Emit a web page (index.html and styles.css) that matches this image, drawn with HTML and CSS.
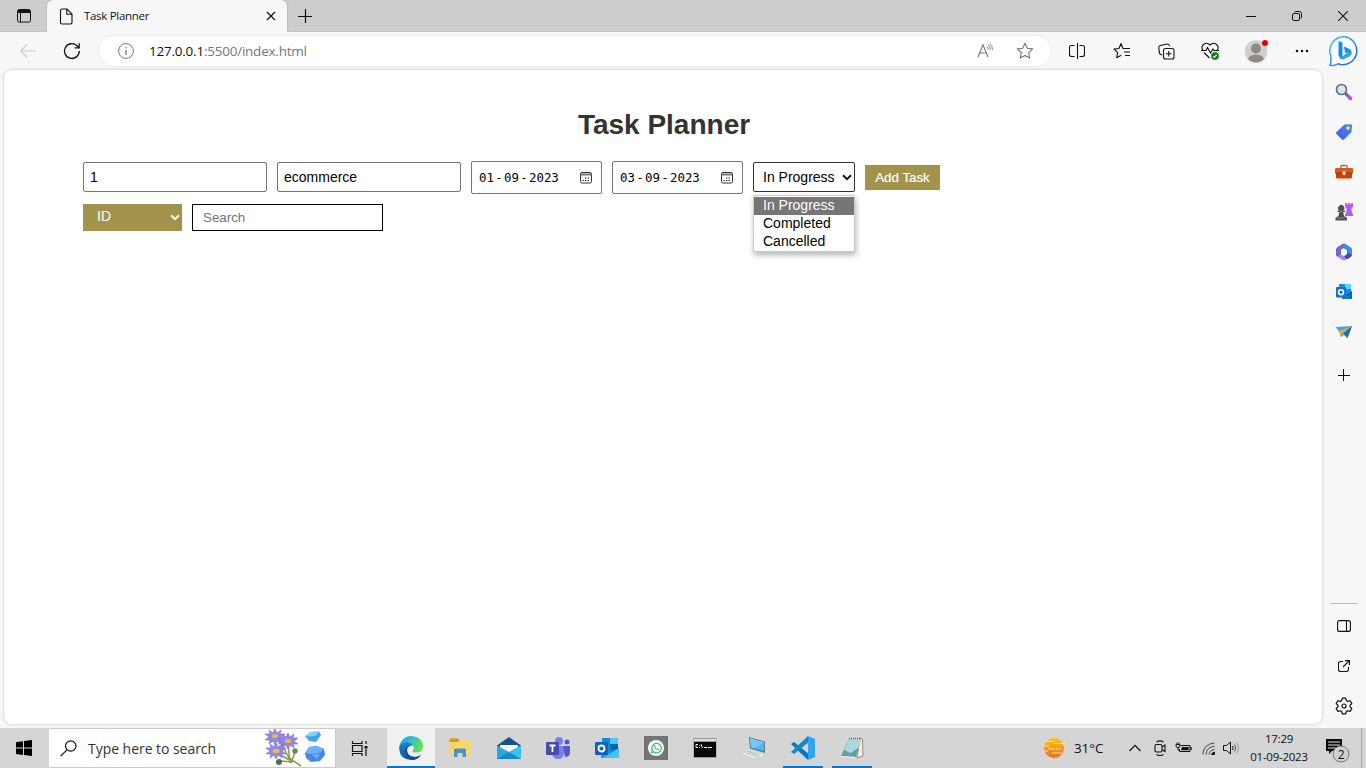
FILE: index.html
```html
<!DOCTYPE html>
<html lang="en">
<head>
<meta charset="utf-8">
<title>Task Planner</title>
<link rel="stylesheet" href="styles.css">
</head>
<body>
<div class="screen">
  <header class="titlebar">
    <div class="tab-actions">
      <svg width="16" height="16" viewBox="0 0 16 16"><rect x="1.500" y="1.500" width="13" height="12.600" rx="2" fill="none" stroke="#111"/><path d="M1.500 5V3.500a2 2 0 0 1 2-2h9a2 2 0 0 1 2 2V5z" fill="#111"/><path d="M4.500 5v9" stroke="#111"/></svg>
    </div>
    <div class="tab">
      <svg class="tab-icon" width="14" height="17" viewBox="0 0 14 17" fill="none" stroke="#111" stroke-width="1.100"><path d="M3 1h5l5 5v8.500q0 1.500-1.500 1.500H3q-1.500 0-1.500-1.500V2.500Q1.500 1 3 1z"/><path d="M7.800 1v5.200H13"/></svg>
      <span class="tab-title">Task Planner</span>
      <svg width="10" height="10" viewBox="0 0 10 10" stroke="#111" stroke-width="1.200"><path d="M1 1l8 8M9 1l-8 8"/></svg>
    </div>
    <div class="new-tab"><svg width="14" height="14" viewBox="0 0 14 14" stroke="#111" stroke-width="1.200"><path d="M7.500 0v14M0 7.500h14"/></svg></div>
    <div class="window-controls">
      <span><svg width="10" height="10" viewBox="0 0 10 10" stroke="#111"><path d="M0 5.500h10"/></svg></span>
      <span><svg width="10" height="10" viewBox="0 0 10 10" fill="none" stroke="#111"><rect x=".5" y="2.500" width="7" height="7" rx="1.500"/><path d="M2.500 1.200Q3 .5 4 .5h3.500q2 0 2 2V6q0 1-.8 1.500"/></svg></span>
      <span><svg width="10" height="10" viewBox="0 0 10 10" stroke="#111" stroke-width="1.100"><path d="M0 0l10 10M10 0L0 10"/></svg></span>
    </div>
  </header>

  <div class="toolbar">
    <span class="tool back"><svg width="16" height="14" viewBox="0 0 16 14" fill="none" stroke="#c9c9c9" stroke-width="1.100"><path d="M7 .5L.7 7 7 13.500M.7 7H16"/></svg></span>
    <span class="tool"><svg width="18" height="18" viewBox="0 0 18 18" fill="none" stroke="#111" stroke-width="1.300"><path d="M16.300 9A7.400 7.400 0 1 1 14 3.700l2 2"/><path d="M16.200 1.300v4.600h-4.600"/></svg></span>
    <div class="address">
      <svg class="info" width="16" height="16" viewBox="0 0 16 16" fill="none" stroke="#777"><circle cx="8" cy="8" r="7.400"/><path d="M8 7v5M8 4v1.400" stroke-width="1.300"/></svg>
      <span class="url"><b>127.0.0.1</b>:5500/index.html</span>
      <svg class="read" width="17" height="16" viewBox="0 0 17 16" fill="none" stroke="#777" stroke-width="1.100"><path d="M1 14L6 1.800 11 14M2.800 10h6.400"/><path d="M9.800 3.600q1.500 1 1.300 3M11 1.800q2.600 1.600 2.300 5M12.500.6q3.400 2.200 3 6.500" stroke-width=".9"/></svg>
      <svg class="star" width="18" height="18" viewBox="0 0 18 18" fill="none" stroke="#777" stroke-width="1.100" stroke-linejoin="round"><path d="M9 1.300l2.300 4.900 5.300.7-3.900 3.700 1 5.400L9 13.400 4.300 16l1-5.400L1.400 6.900l5.300-.7z"/></svg>
    </div>
    <span class="tool"><svg width="16" height="16" viewBox="0 0 16 16" fill="none" stroke="#111" stroke-width="1.100"><path d="M5.500 2.500h-3q-2 0-2 2v7q0 2 2 2h3M10.500 2.500h3q2 0 2 2v7q0 2-2 2h-3"/><path d="M8.500 0v16"/></svg></span>
    <span class="tool favorites"><svg width="18" height="18" viewBox="0 0 18 18" fill="none" stroke="#111" stroke-width="1.100" stroke-linejoin="round"><path d="M11.500 6.500H10L8 1.500 6 6.500l-5 .6 3.700 3.600-1 5 4.500-2.500M8 1.500l2 5h7M11 10h6M12 13.500h5"/></svg></span>
    <span class="tool"><svg width="17" height="17" viewBox="0 0 17 17" fill="none" stroke="#111" stroke-width="1.100"><rect x="5.500" y="5.500" width="10.500" height="10.500" rx="2"/><path d="M10.750 8v5.500M8 10.750h5.500M4 12L2.500 11.200Q1.700 10.800 1.400 10L.8 4.700Q.7 3 2.300 2.500L9 1q1.800-.2 2.300 1.300l.3.900"/></svg></span>
    <span class="tool"><svg width="18" height="18" viewBox="0 0 18 18" fill="none" stroke="#111" stroke-width="1.100"><path d="M2 8.500Q-.5 5 2.500 2.500 6-.2 9 3q3-3.200 6.500-.5Q18.500 5 16 8.500M3 10.500l5.500 5.500M0 8.500h5l1.500-2.800L9.500 11l2.500-4 1 1.500h5"/><circle cx="14" cy="14" r="3.700" fill="#187c22" stroke="#187c22" stroke-width=".5"/><path d="M12.200 14.300l1.200 1 2.200-2.500" stroke="#fff"/></svg></span>
    <span class="tool profile"><svg width="26" height="26" viewBox="0 0 26 26"><defs><clipPath id="av"><circle cx="12" cy="13.500" r="11"/></clipPath></defs><circle cx="12" cy="13.500" r="11.200" fill="#d0cecc"/><circle cx="12" cy="10.500" r="5" fill="#8d8986"/><ellipse cx="12" cy="22" rx="8" ry="5.500" fill="#8d8986" clip-path="url(#av)"/><circle cx="21" cy="5" r="3" fill="#e80000"/></svg></span>
    <span class="tool"><svg width="14" height="4" viewBox="0 0 14 4" fill="#111"><circle cx="2" cy="2" r="1.250"/><circle cx="7" cy="2" r="1.250"/><circle cx="12" cy="2" r="1.250"/></svg></span>
    <span class="tool bing"><svg width="32" height="32" viewBox="0 0 32 32"><defs><linearGradient id="bg1" x1="0" y1="0" x2="1" y2="1"><stop stop-color="#36c5f2"/><stop offset="1" stop-color="#2455d6"/></linearGradient><linearGradient id="bg2" x1="0" y1="0" x2=".8" y2="1"><stop stop-color="#1562dd"/><stop offset="1" stop-color="#30c3ec"/></linearGradient></defs><path d="M16 1.700A14 14 0 1 1 10 28.800Q6 31 2 30.200 3.500 27 2.700 20.500A14 14 0 0 1 16 1.700z" fill="#fff" stroke="url(#bg1)" stroke-width="1.500"/><path d="M10.500 6l4 1.600v12l-1 3.500-3-2.200z" fill="#1c86ee"/><path d="M16 11.500l5 2.200q3 1.400 2.800 4.300-.2 2.300-2.300 3.400l-5.500 2.900q-3.200 1.200-5.300-2.500 2 .5 4-.8l4.300-2.700-2-.8z" fill="url(#bg2)"/></svg></span>
  </div>

  <div class="workspace">
    <main class="page">
      <h1>Task Planner</h1>
      <div class="form-row">
        <div class="field">1</div>
        <div class="field">ecommerce</div>
        <div class="date"><span class="date-value">01<i>-</i>09<i>-</i>2023</span><svg width="14" height="14" viewBox="0 0 14 14"><rect x="1.500" y="1.500" width="11" height="10.500" rx="1.500" fill="none" stroke="#333"/><path d="M1.500 3.500h11" stroke="#777" stroke-width="2"/><path d="M6 7h1.300M8.500 7h1.300M3.500 9.500h1.300M6 9.500h1.300M8.500 9.500h1.300" stroke="#111" stroke-width="1.200"/></svg></div>
        <div class="date"><span class="date-value">03<i>-</i>09<i>-</i>2023</span><svg width="14" height="14" viewBox="0 0 14 14"><rect x="1.500" y="1.500" width="11" height="10.500" rx="1.500" fill="none" stroke="#333"/><path d="M1.500 3.500h11" stroke="#777" stroke-width="2"/><path d="M6 7h1.300M8.500 7h1.300M3.500 9.500h1.300M6 9.500h1.300M8.500 9.500h1.300" stroke="#111" stroke-width="1.200"/></svg></div>
        <div class="status">
          <span>In Progress</span>
          <svg width="10" height="7" viewBox="0 0 10 7" fill="none" stroke="#111" stroke-width="2"><path d="M1 1.200l4 4 4-4"/></svg>
          <div class="options"><div class="option selected">In Progress</div><div class="option">Completed</div><div class="option">Cancelled</div></div>
        </div>
        <div class="add-button">Add Task</div>
      </div>
      <div class="filter-row">
        <div class="filter"><span>ID</span><svg width="10" height="7" viewBox="0 0 10 7" fill="none" stroke="#fff" stroke-width="2"><path d="M1 1.200l4 4 4-4"/></svg></div>
        <div class="search-field">Search</div>
      </div>
    </main>
    <aside class="sidebar">
      <span class="side"><svg width="18" height="18" viewBox="0 0 18 18"><path d="M11.500 11.500l4 4" stroke="#b44af0" stroke-width="3.200" stroke-linecap="round"/><path d="M10 10l2 2" stroke="#666" stroke-width="2"/><circle cx="6.500" cy="6.500" r="5" fill="#c9ebfc" stroke="#6b6e72" stroke-width="1.700"/></svg></span>
      <span class="side"><svg width="18" height="18" viewBox="0 0 18 18"><defs><linearGradient id="tg" x1="0" y1="1" x2="1" y2="0"><stop stop-color="#4b53e6"/><stop offset="1" stop-color="#3b93f7"/></linearGradient></defs><path d="M9.500 1.500l6.500-.3q1 0 1 1L16.500 9 9 16.500q-1 .8-2 0L1.500 11q-1-1 0-2z" fill="url(#tg)"/><circle cx="13" cy="5" r="1.600" fill="#fff2b0" stroke="#e6b91f"/></svg></span>
      <span class="side"><svg width="18" height="18" viewBox="0 0 18 18"><path d="M6 5V3.500Q6 2.500 7 2.500h4q1 0 1 1V5" fill="none" stroke="#777" stroke-width="1.300"/><path d="M1 15V9h16v5q0 1.500-1.500 1.500H2z" fill="#c4420d"/><path d="M0 6.200Q0 5 1.200 5h15.600Q18 5 18 6.200V10H0z" fill="#df571b"/><path d="M0 10h18" stroke="#9e3208"/><rect x="7.500" y="8" width="3" height="4" rx=".7" fill="#ddd"/></svg></span>
      <span class="side"><svg width="18" height="18" viewBox="0 0 18 18"><path d="M10 0h1.800v1.500h1.300V0h1.800v1.500h1.300V0H18v4l-1.500 1 .4 5 1.100 1.200V13h-8v-2l1.200-1 .4-5L10 4z" fill="#bd55f8"/><path d="M.5 17.500v-2.700L3.500 13l.8-4H2.500V7.500h1.700A3.100 3.100 0 1 1 8.300 7.500H10V9H8.200l.8 4 3 1.800v2.700z" fill="#505050"/><path d="M2 15h8M4 8.200h4.500" stroke="#888"/></svg></span>
      <span class="side"><svg width="18" height="18" viewBox="0 0 18 18"><path d="M8 .8q1-.6 2 0l5.500 3.400Q17 5 17 7v5l-5-3.200V7.200L8.500 5 6 6.500V2z" fill="#3a8de0"/><path d="M8 .8L2.500 4Q1 5 1 6.500v5.500q.2 2 3 1L6 11.500V6.500l2.500-1.600z" fill="#7466c8"/><path d="M1 11.500q.8 2.200 3 1.400L6 11.500l3 1.800 2.500-1.500 3.500 2.500-4.500 2.700q-1.500.9-3 0L2 13.700q-1-.8-1-2.200z" fill="#b57fe0"/><path d="M12 8.800l5 3q0 1.500-1.300 2.300L12 16.500l-3-3.200 3-2z" fill="#3451b5"/></svg></span>
      <span class="side"><svg width="18" height="18" viewBox="0 0 18 18"><path d="M4 1h12v13H4z" fill="#1b8edb"/><path d="M10 1h6v5h-6z" fill="#57d2fa"/><path d="M17 8l-6 4-4-2v6h10z" fill="#127ccc"/><path d="M17 8l-6 4 6 4z" fill="#0868b1"/><rect x="1" y="4" width="10" height="10.500" rx="1" fill="#0f70ca"/><circle cx="6" cy="9.200" r="2.500" fill="none" stroke="#fff" stroke-width="1.600"/></svg></span>
      <span class="side"><svg width="18" height="18" viewBox="0 0 18 18"><path d="M.5 4L17 3l-4.500 12-3.700-3L6 14 4.500 9z" fill="#3aa7ef"/><path d="M17 3L8.500 10l4 5z" fill="#176bd0"/><path d="M17 3L4 8l1.500 6L8 10z" fill="#f4a51d"/></svg></span>
      <span class="side plus"><svg width="12" height="12" viewBox="0 0 12 12" stroke="#111"><path d="M5.500 0v12M0 6.500h12"/></svg></span>
      <div class="side-bottom">
        <span class="side"><svg width="14" height="12" viewBox="0 0 14 12" fill="none" stroke="#111" stroke-width="1.100"><rect x=".6" y=".6" width="12.800" height="10.800" rx="2"/><path d="M9.500.5v11"/></svg></span>
        <span class="side"><svg width="12" height="12" viewBox="0 0 12 12" fill="none" stroke="#111" stroke-width="1.100"><path d="M5 1.500H2.700q-2.200 0-2.200 2v5.700q0 2.300 2.200 2.300h5.600q2.200 0 2.200-2.300V7M7 .6h4.400V5M11.400.6L5 7"/></svg></span>
        <span class="side"><svg width="18" height="18" viewBox="0 0 18 18" fill="none" stroke="#111" stroke-width="1.200" stroke-linejoin="round"><path d="M7.300 1.200h3.400l.6 2.300 1.500.9 2.300-.7 1.700 2.900-1.700 1.600v1.700l1.700 1.600-1.700 2.900-2.300-.7-1.500.9-.6 2.300H7.300l-.6-2.300-1.500-.9-2.300.7-1.700-2.900 1.700-1.600V8.200L1.200 6.600l1.700-2.900 2.300.7 1.500-.9z"/><circle cx="9" cy="9" r="2"/></svg></span>
      </div>
    </aside>
  </div>

  <footer class="taskbar">
    <span class="start"><svg width="16" height="16" viewBox="0 0 16 16"><path d="M0 2.200L7 1.200v6.400H0zM8 1.100L16 0v7.600H8zM0 8.500h7v6.400l-7-1zM8 8.500h8V16l-8-1.100z"/></svg></span>
    <div class="task-search">
      <svg width="17" height="17" viewBox="0 0 17 17" fill="none" stroke="#111" stroke-width="1.200"><circle cx="10.700" cy="6" r="5.200"/><path d="M7 9.800L.6 16.200"/></svg>
      <span>Type here to search</span>
      <svg class="flowers" width="64" height="38" viewBox="0 0 64 38">
        <defs><path id="bloom" d="M0-8L2-4 6-7 5-3 10-3 6 0 10 3 5 3 6 7 2 4 0 8-2 4-6 7-5 3-10 3-6 0-10-3-5-3-6-7-2-4z"/></defs>
        <path d="M17 12l9 17 12 8M25 15l2 19M16 25l14 8M32 23l-4 11M18 32l12 1" fill="none" stroke="#8c9c52" stroke-width="1.600"/>
        <g fill="#9387e8" stroke="#7a6cd0" stroke-width=".6"><use href="#bloom" x="12" y="8"/><use href="#bloom" x="25" y="12"/><use href="#bloom" x="13" y="22"/></g>
        <g fill="#eeb944"><ellipse cx="12" cy="7" rx="3" ry="2"/><ellipse cx="25" cy="12" rx="3" ry="2"/><ellipse cx="13" cy="22" rx="3.500" ry="2.200"/></g>
        <circle cx="32" cy="22" r="2.700" fill="#6b8069"/><circle cx="16" cy="33" r="3" fill="#4a7052"/>
        <path d="M42 7l6-4 8-.5 2 3.500-5 7-7-1z" fill="#4aa2ec"/><path d="M42 7l6-4 8-.5-3 4-6 1z" fill="#83d0fb"/>
        <path d="M42 24l4-6 8-1 7 3 1 6-5 6-9 1-5-4z" fill="#4287e9"/><path d="M42 24l4-6 8-1 7 3-5 4-7 1zM49 26l8-1-3 5z" fill="#70b0fb"/>
      </svg>
    </div>
    <span class="task view"><svg width="18" height="17" viewBox="0 0 18 17" fill="none" stroke="#111" stroke-width="1.200"><path d="M1.500 1v2.500h9.500V1M1.500 16v-2.500H11V16M1.500 5.500H11v6H1.500zM15 1v3M15 9v7"/><path d="M13.500 6h3v2.500h-3z" fill="#111" stroke="none"/></svg></span>
    <span class="task active"><svg width="24" height="24" viewBox="0 0 24 24"><defs><linearGradient id="eg" x1="0" y1="0" x2="1" y2=".3"><stop stop-color="#179bd8"/><stop offset=".6" stop-color="#30c4c5"/><stop offset="1" stop-color="#6be04d"/></linearGradient><linearGradient id="ed" x1="0" y1="0" x2="0" y2="1"><stop stop-color="#1685d7"/><stop offset="1" stop-color="#0a53a0"/></linearGradient></defs><path d="M.4 10A12 12 0 0 1 12 0q12 1 12 10.500 0 6-6.500 6.100-4 0-4-1.600 0-.6.800-1.600.8-1.300.3-3.200Q13 6 8 6 3 6 .4 10z" fill="url(#eg)"/><path d="M.2 10.500Q2.500 6 8 6q4.500 0 6.300 3.500Q8 9 8 14.500q.2 6.500 8 6.500 3.500 0 6-2-3.300 5-10 5Q1 23.300.2 13z" fill="url(#ed)"/><path d="M11 9.300q-3 2-3 5.200.2 6.500 8 6.500 3.500 0 6-2-2.800 4-7.500 4.700Q7 22 6 16q0-5 5-6.700z" fill="#114a91"/></svg></span>
    <span class="task"><svg width="22" height="20" viewBox="0 0 22 20"><path d="M.5 1.500Q.5.500 1.500.5H9l2 2-2 3H.5z" fill="#d99a0b"/><path d="M.5 4h8l1.500-1.500h10.500q1 0 1 1V18H.5z" fill="#ffd563"/><path d="M5 19v-7q0-1.500 1.500-1.500h9q1.500 0 1.500 1.500v7h-3.500v-4h-5v4z" fill="#3f92db"/></svg></span>
    <span class="task"><svg width="24" height="24" viewBox="0 0 24 24"><path d="M0 9.500L12 1l12 8.500v3H0z" fill="#0f5594"/><path d="M3 9h18v7H3z" fill="#fff"/><path d="M0 9.500L12 16l12-6.500V23H0z" fill="#2ba6df"/><path d="M0 23l12-7 12 7z" fill="#1689c9"/><path d="M12 16l12-6.500V23z" fill="#35c4ef"/></svg></span>
    <span class="task"><svg width="24" height="24" viewBox="0 0 24 24"><circle cx="13" cy="5" r="4" fill="#7880e8"/><circle cx="21" cy="6" r="2.500" fill="#4f55c8"/><path d="M6 10h12v8q-1 5-6 5t-6-5z" fill="#7a81e5"/><path d="M17 10h7v7q-.5 4-5 4z" fill="#5359c6"/><rect y="6" width="13" height="13" rx="1" fill="#444cae"/><path d="M3.500 9.500h6M6.500 9.500v6.500" stroke="#fff" stroke-width="1.800"/></svg></span>
    <span class="task"><svg width="24" height="24" viewBox="0 0 24 24"><path d="M7 2h16v18H7z" fill="#1688d8"/><path d="M15 2h8v6h-8z" fill="#4dc8f6"/><path d="M15 8h8v6h-8z" fill="#0865b2"/><path d="M6 12l10 6 8-6v10H6z" fill="#1d9be2"/><path d="M24 12L8 22h16z" fill="#46c4f3"/><rect y="6" width="13" height="13" rx="1" fill="#0a64bb"/><circle cx="6.500" cy="12.500" r="3" fill="none" stroke="#fff" stroke-width="1.800"/></svg></span>
    <span class="task"><svg width="24" height="24" viewBox="0 0 24 24"><path fill="#747474" d="M0 0h24v24H0z"/><circle cx="12" cy="12" r="8" fill="#fff"/><path d="M7.500 16.500l.8-2.500A4.700 4.700 0 1 1 10 16z" fill="none" stroke="#29c45b" stroke-width="1.200"/><path d="M10 9.500q.3 4 4.200 4.700l.8-1.200-1.500-.8-.8.700-1.500-1.700.6-.8-.8-1.300z" fill="#29c45b"/></svg></span>
    <span class="task"><svg width="24" height="20" viewBox="0 0 24 20"><path fill="#999" d="M.5 0h23v20H.5z"/><path fill="#ddd" d="M1 1h22v2H1z"/><path fill="#090909" d="M1 4h22v15H1z"/><path d="M5 6.500H3v3h2M6.500 7v.8M6.500 9v.8M8 6l1.500 4M11 9.500h3M15 9.500h4" fill="none" stroke="#eee"/></svg></span>
    <span class="task"><svg width="24" height="24" viewBox="0 0 24 24"><path d="M7 1l16 4.500V17L8 12.500z" fill="#65747d"/><path d="M8 2l14 4.300v9L9 11.500z" fill="#4db6f5"/><path d="M8 2l14 4.300-10 6-3-.8z" fill="#70c9fb"/><path d="M6 14l11 3.500-5 4.500-11-4z" fill="#eef1f1"/><path d="M5 15l11 3.500M3.500 16.500l11 3.500M9 15l-4 4M13 16.500l-4 4" stroke="#a5adb0" stroke-width=".8"/><path d="M18 18l4 1-2 2-3-1z" fill="#e9edee"/></svg></span>
    <span class="task running"><svg width="24" height="24" viewBox="0 0 24 24"><path d="M0 8l3-2 16 13-2 5z" fill="#0876bd"/><path d="M0 16l17-16 2 5L3 18z" fill="#1687ce"/><path d="M17 0l7 3v18l-7 3z" fill="#2ea5ec"/></svg></span>
    <span class="task running"><svg width="24" height="24" viewBox="0 0 24 24"><path d="M20 2l2.500 1L23 20l-6 2z" fill="#f1eee8" stroke="#8b774c" stroke-width=".8"/><path d="M9 3h12l-5 18-15-1z" fill="#639fa7"/><path d="M9 3h12l-2.500 9-8 5-6-3z" fill="#a9dade"/><path d="M9 2.500h11" stroke="#696969" stroke-width="1.500" stroke-dasharray="1 1"/><path d="M1 20.500l15 1" stroke="#e8eeee"/></svg></span>
    <div class="tray">
      <svg class="weather" width="24" height="22" viewBox="0 0 24 22"><defs><linearGradient id="sun" x1="0" y1="0" x2="0" y2="1"><stop stop-color="#f9c515"/><stop offset="1" stop-color="#ee6c18"/></linearGradient></defs><circle cx="12" cy="11" r="10" fill="url(#sun)"/><path d="M3 4.500h10M11 6.500h12M1 9h6M6 12h7M14 12h5M0 14h6M10 16h10" stroke="#f6dfb8" stroke-width="1.200"/></svg>
      <span class="temp">31°C</span>
      <svg class="chevron" width="12" height="8" viewBox="0 0 12 8" fill="none" stroke="#111" stroke-width="1.200"><path d="M.5 7L6 1.300 11.500 7"/></svg>
      <svg class="meet" width="12" height="16" viewBox="0 0 12 16" fill="none" stroke="#111" stroke-width="1.100"><rect x="1" y="4.500" width="7" height="7.500" rx="1.500"/><path d="M8 7l3-2v6.500L8 9.700M2.500 2Q6-.3 9.500 2M2.500 14.500q3.500 2 7 0"/></svg>
      <svg class="battery" width="17" height="12" viewBox="0 0 17 12"><path d="M5.500 3.500h9.500v6H4.500V7" fill="none" stroke="#111"/><path d="M7 5h6.700v3.200H6z" fill="#111"/><path d="M15.500 5h1.200v3h-1.200z" fill="#111"/><path d="M1 2.500h4V4q0 1.500-2 1.500T1 4zM2 .5v2M4 .5v2M3 5.500V8h1.500" fill="none" stroke="#111"/></svg>
      <svg class="wifi" width="13" height="13" viewBox="0 0 13 13" fill="none" stroke="#111"><path d="M.8 12.500Q1.500 2 12.500 1M4 12.500Q4.500 5 12.500 4.300M7 12.500q.5-4.500 5.500-5" stroke="#444"/><path d="M9.500 12.500q.3-2 3-2.300v2.300z" fill="#111"/></svg>
      <svg class="sound" width="17" height="14" viewBox="0 0 17 14" fill="none" stroke="#111"><path d="M.5 4.500h3l4-3.500v12l-4-3.500h-3zM9.500 5q1.300 2 0 4"/><path d="M11.500 3.500q2.500 3.500 0 7" stroke="#555"/><path d="M13.500 1.500q4 5.500 0 11" stroke="#999"/></svg>
      <div class="clock"><span>17:29</span><span>01-09-2023</span></div>
      <svg class="notice" width="25" height="25" viewBox="0 0 25 25"><path d="M1 1h16v12H7l-3 3v-3H1z" fill="#0b0b0b"/><path d="M3 4h12M3 7h12M3 10h9" stroke="#ddd"/><circle cx="16" cy="16" r="8" fill="#d1d1d1" stroke="#777"/><text x="12.700" y="20.500" class="badge">2</text></svg>
    </div>
  </footer>
</div>
</body>
</html>
```
FILE: styles.css
```css
* { box-sizing: border-box; }
body { margin: 0; overflow: hidden; font-family: "Open Sans", "Noto Sans", sans-serif; color: #111; }
svg { display: block; flex: none; }
.screen { width: 1366px; height: 768px; display: flex; flex-direction: column; background: #f7f7f7; }

.titlebar { display: flex; height: 32px; background: #cdcdcd; border-bottom: 1px solid #c4c4c4; flex: none; }
.tab-actions { width: 47px; display: flex; align-items: center; justify-content: center; }
.tab { width: 240px; height: 32px; border-radius: 6px 6px 0 0; background: #f7f7f7; display: flex; align-items: center; padding: 0 11px 0 12px; box-shadow: 0 0 2px #999; clip-path: inset(0 -3px 0 -3px); }
.tab-title { font-size: 11.5px; letter-spacing: -.3px; margin: 0 0 1px 11px; flex: 1; white-space: nowrap; }
.new-tab { width: 35px; display: flex; align-items: center; justify-content: center; }
.window-controls { display: flex; margin-left: auto; }
.window-controls span { width: 46px; display: flex; align-items: center; justify-content: center; }

.toolbar { height: 38px; flex: none; display: flex; align-items: center; }
.tool { width: 44px; height: 38px; display: flex; align-items: center; justify-content: center; flex: none; }
.back { margin-left: 6px; }
.address { width: 952px; height: 30px; margin: 0 4px 0 5px; background: #fff; border-radius: 15px; box-shadow: 0 0 2px #ddd; display: flex; align-items: center; padding: 0 17px 0 19px; }
.url { margin-left: 15px; flex: 1; font-size: 13.5px; letter-spacing: -.23px; color: #777; }
.url b { font-weight: 400; color: #111; }
.read { margin-right: 22px; }
.favorites { margin-left: 1px; }
.profile { width: 48px; padding-left: 2px; }
.bing { width: 40px; }

.workspace { height: 658px; display: flex; flex: none; }
.page { width: 1318px; height: 654px; margin-left: 4px; background: #fff; border-radius: 8px; box-shadow: 0 0 3px #bbb; padding: 39px 79px 0; font-family: "Liberation Sans", Arial, sans-serif; flex: none; }
h1 { margin: 0 0 20px; padding-left: 2px; font-size: 28px; line-height: 32px; color: #333; text-align: center; }
.form-row { display: flex; gap: 10px; align-items: flex-start; height: 33px; font-size: 14px; color: #000; }
.field { width: 184px; height: 30px; margin-top: 1px; border: 1px solid #767676; border-radius: 2px; padding: 0 6px; line-height: 28px; }
.date { width: 131px; height: 33px; border: 1px solid #767676; border-radius: 2px; display: flex; align-items: center; justify-content: space-between; padding: 0 8px 0 7px; }
.date-value { font: 12.4px "DejaVu Sans Mono", monospace; white-space: nowrap; }
.date-value i { font-style: normal; margin: 0 1.3px; }
.status { position: relative; width: 102px; height: 30px; margin-top: 1px; border: 1px solid #333; border-radius: 2px; display: flex; align-items: center; justify-content: space-between; padding: 0 2px 0 9px; white-space: nowrap; }
.options { position: absolute; left: -1px; top: 32px; width: 102px; height: 57px; padding-top: 1px; background: #fff; border: 1px solid #ccc; box-shadow: 1px 3px 6px rgba(0,0,0,.3); }
.option { height: 18px; line-height: 17px; padding-left: 9px; }
.selected { background: #767676; color: #fff; }
.add-button { width: 75px; height: 25px; margin-top: 4px; background: #a2924a; color: #fff; font-size: 13.333px; line-height: 25px; text-align: center; -webkit-text-stroke: .2px #fff; }
.filter-row { display: flex; gap: 10px; margin-top: 10px; font-size: 13.333px; }
.filter { width: 99px; height: 27px; background: #a2924a; color: #fff; display: flex; align-items: center; justify-content: space-between; padding: 0 2px 0 14px; font-size: 14px; line-height: 15px; }
.filter span { padding-bottom: 2px; }
.search-field { width: 191px; height: 27px; border: 1px solid #000; color: #757575; padding-left: 10px; line-height: 25px; }

.sidebar { width: 44px; padding: 2px; display: flex; flex-direction: column; align-items: center; }
.side { height: 40px; width: 40px; display: flex; align-items: center; justify-content: center; flex: none; }
.plus { margin-top: 3px; }
.side-bottom { margin-top: auto; display: flex; flex-direction: column; align-items: center; }
.side-bottom::before { content: ""; width: 28px; height: 1px; margin-bottom: 2px; background: #bbb; }

.taskbar { height: 40px; display: flex; background: #d5d5d5; flex: none; }
.start { width: 49px; padding-right: 1px; display: flex; align-items: center; justify-content: center; }
.task-search { width: 287px; height: 40px; border: 1px solid #cacaca; border-left: 0; background: #fff; display: flex; align-items: center; padding: 0 8px 0 11px; font-size: 14px; letter-spacing: -.04px; color: #333; }
.task-search span { margin-left: 11px; flex: 1; white-space: nowrap; }
.task { width: 49px; height: 40px; display: flex; align-items: center; justify-content: center; flex: none; }
.view { width: 51px; padding-right: 3px; }
.active { width: 48px; background: #f0f0f0; box-shadow: inset 0 -2px #0078d7; }
.running { background: linear-gradient(#0078d7, #0078d7) center bottom / 40px 2px no-repeat; }
.tray { margin-left: auto; display: flex; align-items: center; width: 324px; border-right: 1px solid #aaa; margin-right: 4px; padding-left: 4px; }
.temp { width: 47px; margin-left: 8px; font-size: 13.5px; letter-spacing: -.1px; }
.chevron { margin-left: 8px; }
.meet { margin-left: 13px; }
.battery { margin-left: 9px; }
.wifi { margin-left: 10px; }
.sound { margin-left: 8px; }
.clock { width: 70px; margin-left: 4px; display: flex; flex-direction: column; align-items: center; font-size: 11.5px; line-height: 18px; letter-spacing: -.25px; }
.notice { margin: 5px 0 0 11px; }
.badge { font: 12px "Open Sans", sans-serif; fill: #111; }
```
